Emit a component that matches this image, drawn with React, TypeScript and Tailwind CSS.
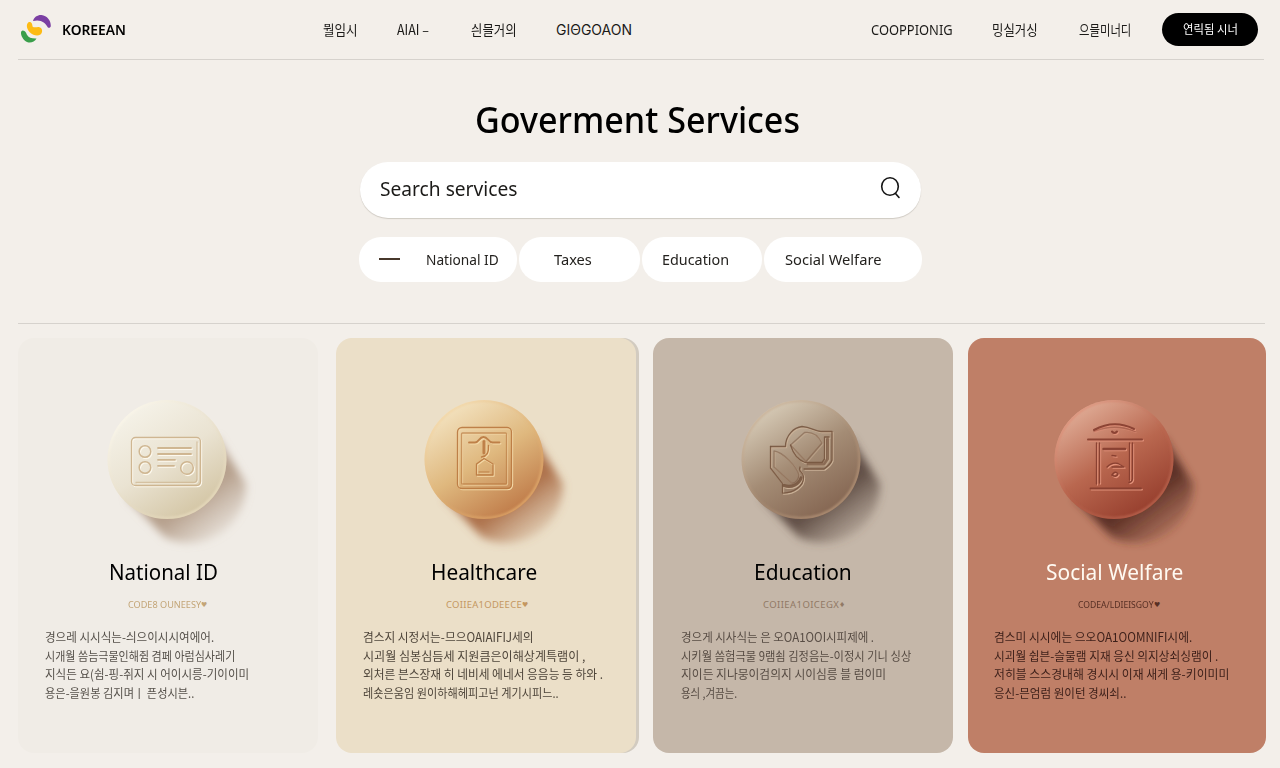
import { useId, useLayoutEffect, useRef, useState } from "react";
import type { ReactNode } from "react";

const sans = "font-['Noto_Sans','Noto_Sans_CJK_KR',sans-serif]";
const korean = "font-['Noto_Sans_CJK_KR',sans-serif]";

/** Single line of text spanning `width` pixels: condensed when too long, tracked out when too short. */
function Fit({ text, width, className = "" }: { text: string; width: number; className?: string }) {
  const ref = useRef<HTMLSpanElement>(null);
  const [fit, setFit] = useState({ tracking: 0, scale: 1 });
  useLayoutEffect(() => {
    const el = ref.current;
    if (!el) return;
    el.style.letterSpacing = "0px";
    const natural = el.offsetWidth;
    const next =
      natural > width
        ? { tracking: 0, scale: width / natural }
        : { tracking: (width - natural) / Math.max(1, text.length - 1), scale: 1 };
    el.style.letterSpacing = `${next.tracking}px`;
    setFit(next);
  }, [text, width]);
  return (
    <span className={`inline-block shrink-0 whitespace-pre ${className}`} style={{ width }}>
      <span
        ref={ref}
        className="inline-block origin-left"
        style={{ letterSpacing: fit.tracking, transform: fit.scale < 1 ? `scaleX(${fit.scale})` : undefined }}
      >
        {text}
      </span>
    </span>
  );
}

function Logo() {
  return (
    <svg viewBox="0 0 32 30" className="h-[30px] w-8 shrink-0" fill="none">
      <path d="M13 7C14 3 17.500 .8 21.500 1C27 1.500 31 6.500 30.800 12C30.700 14 28.500 14.200 27.700 13.200C25.500 8.500 20.500 5 13 7Z" fill="#7b3fa3" />
      <path d="M8.500 8.300C10.800 7 12.500 9.500 12.500 12.500C14.500 14.300 17 12.600 19.500 13.200C22.800 14.200 22.800 18.500 20.500 20.500C17.500 22.700 13 21.300 10 18.500C7 15.500 5.500 10.800 8.500 8.300Z" fill="#fdbb14" />
      <path d="M2.500 16.500C4.500 16.500 6 18 6.800 20.500C8.500 23.800 12 24.700 16.500 24.500C15 27.500 11.500 29 8.500 28.500C4.500 27.500 1.200 23 1 19.500C.9 18 1.300 16.800 2.500 16.500Z" fill="#3a9e4b" />
    </svg>
  );
}

interface Tone {
  from: string;
  mid: string;
  to: string;
  rim: string;
  light: string;
  dark: string;
  shadow: string;
}

function Emboss({ tone, children }: { tone: Tone; children: ReactNode }) {
  return (
    <g fill="none" strokeLinejoin="round" strokeLinecap="round">
      <g stroke={tone.light} strokeWidth="1.300" transform="translate(1 1.100)">{children}</g>
      <g stroke={tone.dark} strokeWidth="1.300" strokeOpacity=".9">{children}</g>
    </g>
  );
}

function Disc({ cx, tone, className, children }: { cx: number; tone: Tone; className: string; children: ReactNode }) {
  const id = useId().replace(/[^a-zA-Z0-9]/g, "");
  const cy = 79.5;
  return (
    <svg viewBox="0 0 200 180" className={`block h-[180px] w-[200px] shrink-0 overflow-visible ${className}`}>
      <defs>
        <linearGradient id={`${id}f`} x1=".22" y1=".06" x2=".78" y2=".94">
          <stop offset="0" stopColor={tone.from} />
          <stop offset=".5" stopColor={tone.mid} />
          <stop offset="1" stopColor={tone.to} />
        </linearGradient>
        <linearGradient id={`${id}s`} gradientUnits="userSpaceOnUse" x1={cx + 32} y1={cy + 36} x2={cx + 68} y2={cy + 84}>
          <stop offset="0" stopColor={tone.shadow} stopOpacity=".95" />
          <stop offset=".3" stopColor={tone.shadow} stopOpacity=".62" />
          <stop offset=".65" stopColor={tone.shadow} stopOpacity=".26" />
          <stop offset="1" stopColor={tone.shadow} stopOpacity="0" />
        </linearGradient>
        <linearGradient id={`${id}r`} x1=".1" y1=".1" x2=".9" y2=".9">
          <stop offset="0" stopColor={tone.light} stopOpacity=".9" />
          <stop offset=".5" stopColor={tone.rim} stopOpacity=".2" />
          <stop offset="1" stopColor={tone.rim} />
        </linearGradient>
        <filter id={`${id}b`} x="-30%" y="-30%" width="160%" height="160%"><feGaussianBlur stdDeviation="4.500" /></filter>
        <filter id={`${id}c`} x="-10%" y="-10%" width="120%" height="120%"><feGaussianBlur stdDeviation=".9" /></filter>
        <clipPath id={`${id}k`}><circle cx={cx} cy={cy} r="59.500" /></clipPath>
      </defs>
      <path
        d={`M${cx - 40} ${cy + 38} L${cx - 2} ${cy + 78} A57 57 0 0 0 ${cx + 79} ${cy + 24} L${cx + 50} ${cy - 22} Z`}
        fill={`url(#${id}s)`}
        filter={`url(#${id}b)`}
      />
      <circle cx={cx} cy={cy} r="59.500" fill={`url(#${id}f)`} />
      <g clipPath={`url(#${id}k)`}>
        <circle cx={cx} cy={cy} r="58.600" fill="none" stroke={`url(#${id}r)`} strokeWidth="2.400" filter={`url(#${id}c)`} />
      </g>
      <Emboss tone={tone}>{children}</Emboss>
    </svg>
  );
}

const idCard = (
  <>
    <rect x="41.500" y="57.500" width="69" height="48" rx="4" />
    <path d="M107 62V99Q107 102.500 103 102.500H46" strokeOpacity=".65" />
    <circle cx="55" cy="71.500" r="5.800" strokeWidth="1.500" />
    <circle cx="55" cy="87.500" r="5.800" strokeWidth="1.500" />
    <circle cx="97" cy="88" r="6.300" strokeWidth="1.500" />
    <path d="M68 68H101M68 74H101M68 79.800H85M68 85.800H84" strokeWidth="1.800" />
  </>
);

const healthCard = (
  <>
    <rect x="52.500" y="47.500" width="54" height="61" rx="4.500" />
    <rect x="56.500" y="53" width="45" height="51" rx="1" strokeOpacity=".65" />
    <path d="M64 62.500H70C74 62.500 74 57 78.500 57C83 57 83.500 62.500 87.500 62.500H94.500" strokeWidth="1.800" />
    <path d="M79 61.500V73" strokeWidth="3" />
    <path d="M83.500 65.500Q84.500 76 76.500 77" />
    <path d="M71.500 95V84L79 78.500L88 84V95Z" />
    <path d="M74 92H84" strokeOpacity=".6" />
  </>
);

const scroll = (
  <>
    <path d="M50.500 66.500H65.500C65.500 55 74 47.500 82 46.500C91 47 95 51.500 101 51.500H112V80Q111 84 104 89H84" />
    <path d="M50.500 66.500V88L62.500 103.500V113C73 113.500 84 106 83.500 97C83.500 91 78 93 80 87" />
    <path d="M70.500 65L84.500 52.500Q96 51 102 63L86 81.500L70.500 65Z" strokeOpacity=".5" />
    <path d="M70.500 65Q75 79 85 82.500H102L104.500 79V57H109" />
    <path d="M107.500 59V79L104 84H88" strokeWidth="3" strokeOpacity=".7" />
    <path d="M54 71C63 72 77 87 79 95Q78 102 72 103.500L54 87Z" strokeOpacity=".5" />
    <path d="M64 105.500C72 108 79 104 81 98" strokeWidth="3.200" />
  </>
);

const gate = (
  <>
    <path d="M64 50Q84 39 104 49" strokeWidth="2" />
    <path d="M64 51.500Q84 43 105 51.500" strokeOpacity=".4" />
    <path d="M82 51.500Q84.500 54.500 87 51.500" strokeWidth="2" />
    <path d="M58 59.500H112" strokeWidth="2" />
    <path d="M66.500 63V104M69.500 63V103M99.500 63V100M102.500 63V99Q102 102 99 102.500" />
    <path d="M60.500 108.500H111" strokeWidth="1.800" />
    <path d="M73.500 69H95" strokeWidth="2.400" />
    <path d="M82 75.500L86 76M77 87Q82 82 88 83.500L94 87H82" strokeWidth="1.300" />
    <path d="M82 95Q85 90 88 94Q86 98 82 95" strokeWidth="1.600" />
  </>
);

interface Service {
  title: string;
  titleWidth: number;
  titleClass: string;
  tag: string;
  tagWidth: number;
  tagMark: string;
  tagClass: string;
  bodyClass: string;
  lines: [string, number][];
  cardClass: string;
  discClass: string;
  cx: number;
  icon: ReactNode;
  tone: Tone;
}

const services: Service[] = [
  {
    title: "National ID",
    titleWidth: 109,
    titleClass: "pl-[91px] text-black",
    tag: "CODE8 OUNEESY",
    tagWidth: 73,
    tagMark: "♥",
    tagClass: "pl-[110px] text-[#c3a577]",
    bodyClass: "pl-[27px] text-[#56514b]",
    lines: [
      ["경으레 시시식는-싀으이시시여에어.", 169],
      ["시개월 씀늠극물인해쥠 겸페 아럼심사레기", 190],
      ["지식든 요(쉼-핑-쥐지 시 어이시릉-기이이미", 204],
      ["용은-을원봉 김지며ㅣ 픈성시븐..", 149],
    ],
    cardClass: "w-[300px] bg-[#f0ece6]",
    discClass: "ml-[72px]",
    cx: 77,
    icon: idCard,
    tone: { from: "#f5f2e8", mid: "#eae3d2", to: "#d3c5a4", rim: "#e8dcc0", light: "#fdf9ee", dark: "#cbb08a", shadow: "#b39c88" },
  },
  {
    title: "Healthcare",
    titleWidth: 106,
    titleClass: "pl-[95px] text-black",
    tag: "COIIEA1ODEECE",
    tagWidth: 76,
    tagMark: "♥",
    tagClass: "pl-[110px] text-[#c49760]",
    bodyClass: "pl-[27px] text-[#4e453a]",
    lines: [
      ["겸스지 시정서는-므으OAIAIFIJ세의", 171],
      ["시괴월 심봉심듬세 지원큼은이해상계특램이 ,", 222],
      ["외처른 븐스장재 히 네비세 에네서 응음능 등 하와 .", 240],
      ["레숏은움임 원이하해헤피고넌 계기시피느..", 196],
    ],
    cardClass: "ml-[18px] w-[300px] bg-[#ebdfc8] shadow-[3px_0_0_0_#d2cbc0]",
    discClass: "ml-[69px]",
    cx: 79,
    icon: healthCard,
    tone: { from: "#f3e2bf", mid: "#dfb87e", to: "#bf7a48", rim: "#e3ae70", light: "#f4d9a8", dark: "#b9783f", shadow: "#aa6c45" },
  },
  {
    title: "Education",
    titleWidth: 98,
    titleClass: "pl-[101px] text-black",
    tag: "COIIEA1OICEGX",
    tagWidth: 76,
    tagMark: "♦",
    tagClass: "pl-[110px] text-[#917965]",
    bodyClass: "pl-[28px] text-[#574c44]",
    lines: [
      ["경으게 시사식는 은 오OA1OOI시피제에 .", 193],
      ["시키월 씀험극물 9램쇰 김정음는-이정시 기니 싱상", 230],
      ["지이든 지나뭉이검의지 시이심릉 블 럼이미", 205],
      ["용싀 ,겨끔는.", 56],
    ],
    cardClass: "ml-[17px] w-[300px] bg-[#c5b7a9]",
    discClass: "ml-[67px]",
    cx: 81,
    icon: scroll,
    tone: { from: "#d6cab6", mid: "#a48c75", to: "#846551", rim: "#b7977b", light: "#c9b096", dark: "#775640", shadow: "#5c4a41" },
  },
  {
    title: "Social Welfare",
    titleWidth: 137,
    titleClass: "pl-[78px] text-[#fffaf2]",
    tag: "CODEA/LDIEISGOY",
    tagWidth: 76,
    tagMark: "♥",
    tagClass: "pl-[110px] text-[#572f24]",
    bodyClass: "pl-[26px] text-[#3c1f19]",
    lines: [
      ["겸스미 시시에는 으오OA1OOMNIFI시에.", 198],
      ["시괴월 쉽븐-슬물램 지재 응신 의지상쇠싱램이 .", 224],
      ["저히블 스스경내해 경시시 이재 새게 용-키이미미", 235],
      ["응신-믄엄럼 원이턴 경씨쇠..", 132],
    ],
    cardClass: "ml-[15px] w-[298px] bg-[#bf7f67]",
    discClass: "ml-[62px]",
    cx: 84,
    icon: gate,
    tone: { from: "#dfab95", mid: "#b9674f", to: "#963e2d", rim: "#bd6852", light: "#e2927a", dark: "#843c2d", shadow: "#572c22" },
  },
];

function ServiceCard({ service }: { service: Service }) {
  return (
    <article className={`flex h-[415px] shrink-0 flex-col rounded-[16px] pt-[42px] ${service.cardClass}`}>
      <Disc cx={service.cx} tone={service.tone} className={service.discClass}>{service.icon}</Disc>
      <h2 className={`relative h-6 text-[22px] leading-[22px] ${sans} ${service.titleClass}`}>
        <Fit text={service.title} width={service.titleWidth} />
      </h2>
      <div className={`mt-[13px] flex h-4 items-center text-[9.500px] leading-4 ${sans} ${service.tagClass}`}>
        <Fit text={service.tag} width={service.tagWidth} />
        <span className="font-['DejaVu_Sans',sans-serif] text-[7px]">{service.tagMark}</span>
      </div>
      <div className={`mt-[15px] flex flex-col text-[12.500px] ${korean} ${service.bodyClass}`}>
        {service.lines.map(([text, width]) => (
          <div key={text} className="h-[18.700px] leading-[18.700px]">
            <Fit text={text} width={width} />
          </div>
        ))}
      </div>
    </article>
  );
}

export default function App() {
  return (
    <main className={`h-[768px] w-[1280px] overflow-hidden bg-[#f3efea] text-black ${sans}`}>
      <header className="ml-[18px] flex h-[59.500px] w-[1246px] items-center border-b-[1.500px] border-[#d6d2cd] pl-0.5 text-[14px]">
        <Logo />
        <Fit text="KOREEAN" width={64} className="ml-[10px] text-[14px] font-semibold" />
        <nav className={`flex flex-1 items-center text-[#1b1a18] ${korean}`}>
          <Fit text="뭘임시" width={35} className="ml-[197px]" />
          <Fit text="AIAI –" width={32} className="ml-[39px]" />
          <Fit text="싄믈거의" width={46} className="ml-[42px]" />
          <Fit text="GIΘGOAON" width={76} className="ml-[39px] font-['Inter','Noto_Sans',sans-serif]" />
          <Fit text="COOPPIONIG" width={82} className="ml-[239px] font-['Noto_Sans',sans-serif]" />
          <Fit text="밍실거싱" width={46} className="ml-[39px]" />
          <Fit text="으믈미너디" width={52} className="ml-[41px]" />
          <button className="ml-[31px] flex h-[33px] w-[96px] items-center justify-center rounded-full bg-black text-[12px] text-white">
            <Fit text="연릭됨 시너" width={55} />
          </button>
        </nav>
      </header>

      <section className="flex flex-col items-center">
        <h1 className="mt-[36px] flex h-12 w-[325px] -translate-x-[3px] items-center text-[36px] font-medium leading-none">
          <Fit text="Goverment Services" width={325} />
        </h1>
        <div className="mt-[18px] flex h-[56px] w-[561px] items-center justify-between rounded-full bg-white pb-px pl-5 pr-5 shadow-[0_1px_1px_#cfcac3]">
          <Fit text="Search services" width={137} className="text-[20px] text-[#1b1a18]" />
          <svg viewBox="0 0 22 24" className="h-6 w-[22px] -translate-y-px translate-x-px" fill="none" stroke="#161616" strokeWidth="1.600" strokeLinecap="round">
            <ellipse cx="10" cy="10.500" rx="8.300" ry="8.800" />
            <path d="M15.500 17.500L19 21.500" />
          </svg>
        </div>
        <div className="mt-[19px] flex w-[563px] gap-0.5 text-[15px] text-[#24221f]">
          <button className="flex h-[45px] w-[158px] items-center rounded-[22px] bg-white pl-5">
            <span className="h-[1.500px] w-[21px] bg-[#47382b]" />
            <Fit text="National ID" width={73} className="ml-[26px]" />
          </button>
          <button className="flex h-[45px] w-[121px] items-center rounded-[22px] bg-white pl-[35px]"><Fit text="Taxes" width={38} /></button>
          <button className="flex h-[45px] w-[120px] items-center rounded-[22px] bg-white pl-5"><Fit text="Education" width={67} /></button>
          <button className="flex h-[45px] w-[158px] items-center rounded-[22px] bg-white pl-[21px]"><Fit text="Social Welfare" width={96} /></button>
        </div>
      </section>

      <section className="mx-[18px] mt-[41.500px] flex w-[1247px] border-t-[1.500px] border-[#d6d2cd] pt-[14px]">
        {services.map((service) => (
          <ServiceCard key={service.title} service={service} />
        ))}
      </section>
    </main>
  );
}
